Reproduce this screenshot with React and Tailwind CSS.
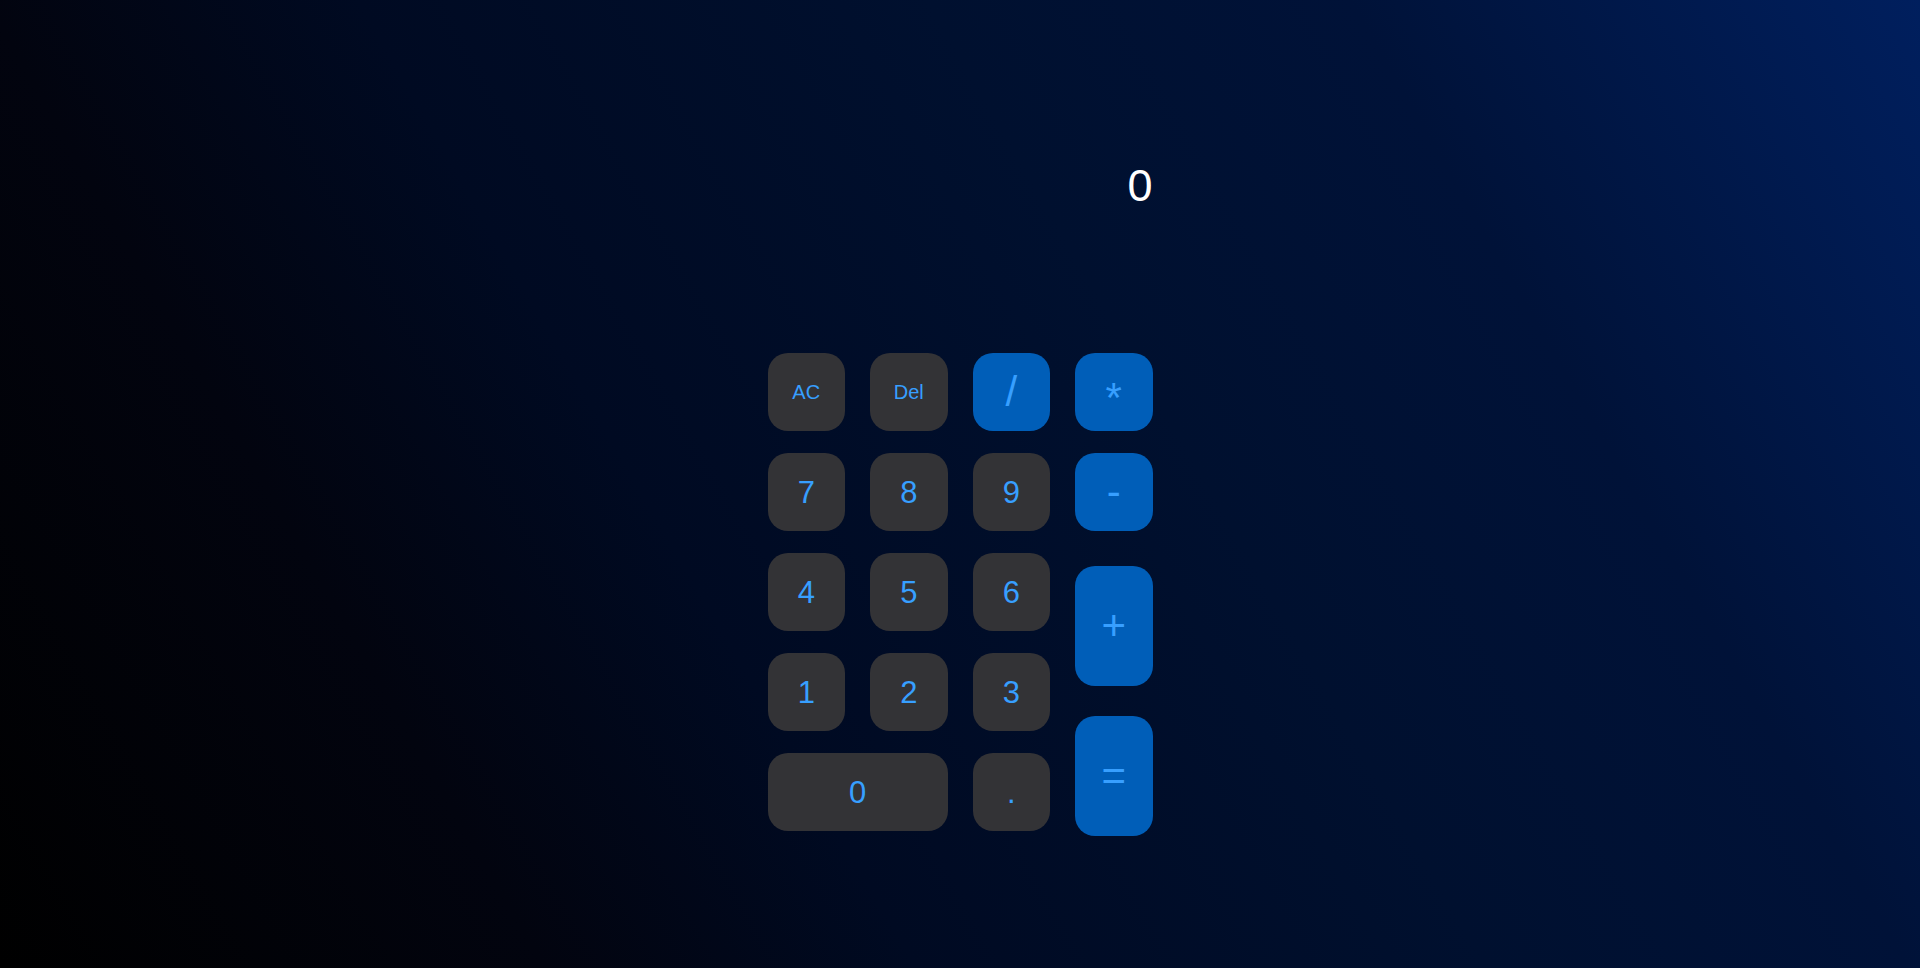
import React, { useState } from 'react';

const base = 'flex items-center justify-center rounded-[20px] text-[#379fff] leading-none';
const digitBtn = `${base} h-[78px] bg-[#333336] text-[31px]`;
const textBtn = `${base} h-[78px] bg-[#333336] text-[20px]`;
const opBtn = `${base} bg-[#005eb8] text-[42px]`;

export default function App() {
    const [display, setDisplay] = useState('0');

    const press = (k) => {
        if (k === 'AC') return setDisplay('0');
        if (k === 'Del') return setDisplay((d) => (d.length > 1 ? d.slice(0, -1) : '0'));
        if (k === '=') {
            try {
                // eslint-disable-next-line no-new-func
                const r = Function(`return (${display})`)();
                setDisplay(String(r));
            } catch {
                setDisplay('Error');
            }
            return;
        }
        setDisplay((d) => (d === '0' && k !== '.' ? k : d + k));
    };

    const left = ['7', '8', '9', '4', '5', '6', '1', '2', '3'];

    return (
        <div
            className="min-h-screen w-full bg-[linear-gradient(60deg,#000000_0%,#02040f_22%,#000a22_37%,#00102f_60%,#001238_77%,#001f5e_100%)]"
            style={{ fontFamily: '"Liberation Sans", Arial, sans-serif' }}
        >
            <div className="mx-auto w-[385px] pt-[163px]">
                {/* pantalla */}
                <div className="h-[45px] text-right text-[45px] leading-none text-white">{display}</div>

                {/* teclado */}
                <div className="mt-[145px] flex items-start gap-x-[25px]">
                    <div className="grid w-[282.5px] grid-cols-3 gap-x-[25px] gap-y-[22px]">
                        <button onClick={() => press('AC')} className={textBtn}>AC</button>
                        <button onClick={() => press('Del')} className={textBtn}>Del</button>
                        <button onClick={() => press('/')} className={`${opBtn} h-[78px]`}>/</button>
                        {left.map((k) => (
                            <button key={k} onClick={() => press(k)} className={digitBtn}>{k}</button>
                        ))}
                        <button onClick={() => press('0')} className={`${digitBtn} col-span-2`}>0</button>
                        <button onClick={() => press('.')} className={digitBtn}>.</button>
                    </div>
                    <div className="flex w-[77.5px] flex-col">
                        <button onClick={() => press('*')} className={`${opBtn} h-[78px] pt-[12px]`}>*</button>
                        <button onClick={() => press('-')} className={`${opBtn} mt-[22px] h-[78px]`}>-</button>
                        <button onClick={() => press('+')} className={`${opBtn} mt-[35px] h-[120px]`}>+</button>
                        <button onClick={() => press('=')} className={`${opBtn} mt-[30px] h-[120px]`}>=</button>
                    </div>
                </div>
            </div>
        </div>
    );
}
